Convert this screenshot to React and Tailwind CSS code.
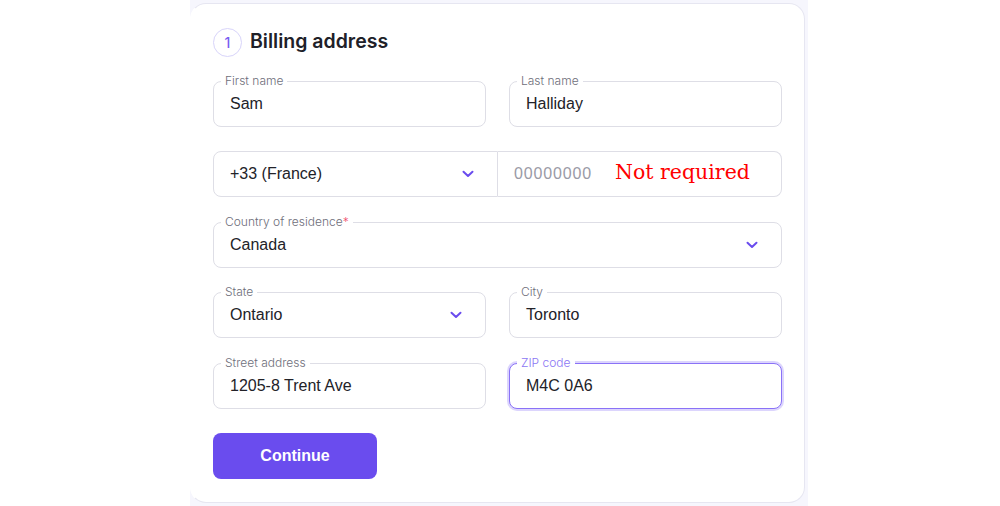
import React from "react";

function Chevron() {
  return (
    <svg width="12" height="8" viewBox="0 0 12 8" fill="none" className="shrink-0">
      <path d="M1.5 1.75 L6 6 L10.5 1.75" stroke="#6a4cee" strokeWidth="2" strokeLinecap="round" strokeLinejoin="round" />
    </svg>
  );
}

function Field({ label, value, required, focused, chevron, className = "" }) {
  return (
    <div
      className={
        "relative h-[46px] rounded-[8px] border bg-white flex items-center pl-[16px] pr-[23px] " +
        (focused
          ? "border-[#8a72f7] shadow-[0_0_0_2px_rgba(140,116,248,0.3)] "
          : "border-[#dedee6] ") +
        className
      }
    >
      {label && (
        <span
          className={
            "absolute left-[7px] top-[-9px] bg-white px-[4px] text-[12px] leading-[16px] font-['Inter',sans-serif] font-light " +
            (focused ? "text-[#8b76f4]" : "text-[#6e6e7a]")
          }
        >
          {label}
          {required && <span className="text-[#f0506e]">*</span>}
        </span>
      )}
      <span className="flex-1 text-[16px] text-[#222228] font-['Liberation_Sans',Arial,sans-serif]">{value}</span>
      {chevron && <Chevron />}
    </div>
  );
}

export default function App() {
  return (
    <div className="w-[1000px] h-[506px] bg-white flex">
      <div className="ml-[190px] w-[618px] h-[506px] bg-[#f6f6fd] pt-[3px] pr-[3px] pb-[3px]">
        <div className="h-[500px] w-[615px] bg-white border border-[#e6e6f1] border-l-white rounded-[16px] px-[22px] pt-[23px] pb-[23px] flex flex-col">
          <div className="flex items-center gap-[8px] h-[30px]">
            <div className="w-[29px] h-[29px] rounded-full border border-[#d8d4fa] flex items-center justify-center text-[14px] text-[#7a5ef2] font-['Inter',sans-serif] font-medium">
              1
            </div>
            <div className="text-[19.5px] font-semibold text-[#202028] font-['Inter',sans-serif]">
              Billing address
            </div>
          </div>
          <div className="mt-[24px] flex flex-col gap-[24.4px]">
            <div className="grid grid-cols-2 gap-[23px]">
              <Field label="First name" value="Sam" />
              <Field label="Last name" value="Halliday" />
            </div>
            <div className="flex">
              <div className="w-[285px] h-[46px] rounded-l-[8px] border border-[#dedee6] flex items-center pl-[16px] pr-[23px] bg-white">
                <span className="flex-1 text-[16px] text-[#222228] font-['Liberation_Sans',Arial,sans-serif]">+33 (France)</span>
                <Chevron />
              </div>
              <div className="flex-1 h-[46px] rounded-r-[8px] border border-l-0 border-[#dedee6] flex items-center pl-[16px] bg-white">
                <span className="text-[16px] text-[#9a9aa6] tracking-[0.85px] font-['Liberation_Sans',Arial,sans-serif]">00000000</span>
                <span className="ml-[23px] text-[20.5px] text-[#ff0000] font-['DejaVu_Serif',serif] leading-none mb-[4px]">Not required</span>
              </div>
            </div>
            <Field label="Country of residence" required value="Canada" chevron />
            <div className="grid grid-cols-2 gap-[23px]">
              <Field label="State" value="Ontario" chevron />
              <Field label="City" value="Toronto" />
            </div>
            <div className="grid grid-cols-2 gap-[23px]">
              <Field label="Street address" value="1205-8 Trent Ave" />
              <Field label="ZIP code" value="M4C 0A6" focused />
            </div>
            <button className="w-[164px] h-[46px] rounded-[8px] bg-[#6a4cee] text-white text-[16px] font-bold font-['Liberation_Sans',Arial,sans-serif] pt-[1px]">
              Continue
            </button>
          </div>
        </div>
      </div>
    </div>
  );
}
